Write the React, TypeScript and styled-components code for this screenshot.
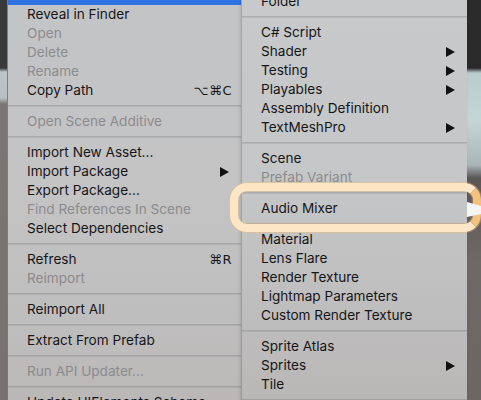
import React from 'react';
import styled, { createGlobalStyle } from 'styled-components';

const GlobalStyle = createGlobalStyle`
    body {
        margin: 0;
        background: #2b2b2b;
        font-family: Inter, "DejaVu Sans", sans-serif;
    }
`

type Item =
    | { kind: 'sep' }
    | { kind: 'item'; label: string; disabled?: boolean; sub?: boolean; shortcut?: string; active?: boolean };

const sep: Item = { kind: 'sep' };
const it = (label: string, extra: Partial<Omit<Extract<Item, { kind: 'item' }>, 'kind' | 'label'>> = {}): Item =>
    ({ kind: 'item', label, ...extra });

const leftItems: Item[] = [
    it('Create', { active: true }),
    it('Reveal in Finder'),
    it('Open', { disabled: true }),
    it('Delete', { disabled: true }),
    it('Rename', { disabled: true }),
    it('Copy Path', { shortcut: '⌥⌘C' }),
    sep,
    it('Open Scene Additive', { disabled: true }),
    sep,
    it('Import New Asset...'),
    it('Import Package', { sub: true }),
    it('Export Package...'),
    it('Find References In Scene', { disabled: true }),
    it('Select Dependencies'),
    sep,
    it('Refresh', { shortcut: '⌘R' }),
    it('Reimport', { disabled: true }),
    sep,
    it('Reimport All'),
    sep,
    it('Extract From Prefab'),
    sep,
    it('Run API Updater...', { disabled: true }),
    sep,
    it('Update UIElements Schema'),
];

const rightItems: Item[] = [
    it('Folder'),
    sep,
    it('C# Script'),
    it('Shader', { sub: true }),
    it('Testing', { sub: true }),
    it('Playables', { sub: true }),
    it('Assembly Definition'),
    it('TextMeshPro', { sub: true }),
    sep,
    it('Scene'),
    it('Prefab Variant', { disabled: true }),
    sep,
    it('Audio Mixer'),
    sep,
    it('Material'),
    it('Lens Flare'),
    it('Render Texture'),
    it('Lightmap Parameters'),
    it('Custom Render Texture'),
    sep,
    it('Sprite Atlas'),
    it('Sprites', { sub: true }),
    it('Tile'),
    sep,
];

const Screen = styled.div`
    position: relative;
    width: 481px;
    height: 400px;
    overflow: hidden;
    display: flex;
    align-items: flex-start;
`

const LeftEdge = styled.div`
    width: 7px;
    height: 100%;
    flex-shrink: 0;
    background: linear-gradient(to bottom, #3a3a3b 0, #3a3a3b 68px, #bcc5c8 72px, #b7bfc2 98px, #7b7675 104px, #777271 100%);
`

const RightEdge = styled.div`
    flex: 1;
    height: 100%;
    background: linear-gradient(to bottom, #2a2a2b 0, #2a2a2b 68px, #b9cdcf 73px, #c4d6d6 120px, #a9b6b8 165px, #5a5656 178px, #6e6866 260px, #6d6663 100%);
`

const Menu = styled.div<{ $width: number; $offset: number; $side: 'left' | 'right' }>`
    width: ${p => p.$width}px;
    flex-shrink: 0;
    margin-top: ${p => p.$offset}px;
    height: 440px;
    box-sizing: border-box;
    display: flex;
    flex-direction: column;
    background: ${p => p.$side === 'left'
        ? 'linear-gradient(to bottom, #c3c4c6 0%, #c4c4c5 45%, #bfbebe 75%, #b9b6b5 100%)'
        : 'linear-gradient(to bottom, #c7c9cb 0%, #c5c6c7 45%, #bebdbd 75%, #b8b5b4 100%)'};
    border-left: 1px solid ${p => p.$side === 'left' ? 'rgba(0,0,0,0.35)' : 'rgba(0,0,0,0.18)'};
    ${p => p.$side === 'right' && 'box-shadow: -1px 0 3px rgba(0,0,0,0.12);'}
    position: relative;
`

const Row = styled.div<{ $disabled?: boolean; $active?: boolean }>`
    height: 19px;
    line-height: 19px;
    display: flex;
    align-items: center;
    padding: 0 9px 0 19px;
    font-size: 13.6px;
    white-space: nowrap;
    color: ${p => p.$active ? '#ffffff' : p.$disabled ? '#8b8b8d' : '#161617'};
    background: ${p => p.$active ? '#2f72e4' : 'transparent'};
`

const Label = styled.span`
    flex: 1;
`

const Shortcut = styled.span`
    font-family: "DejaVu Sans", sans-serif;
    font-size: 13px;
    letter-spacing: 0.5px;
`

const Arrow = styled.svg`
    width: 9px;
    height: 10px;
    margin-right: 3px;
`

const Separator = styled.div`
    height: 12px;
    display: flex;
    align-items: center;
    &::after {
        content: '';
        flex: 1;
        height: 1px;
        background: rgba(0, 0, 0, 0.13);
        border-bottom: 1px solid rgba(255, 255, 255, 0.12);
    }
`

const Ring = styled.div`
    position: absolute;
    left: 230px;
    top: 183px;
    width: 251px;
    height: 49px;
    box-sizing: border-box;
    border: 8px solid #fde6c5;
    border-right-color: #f3c27f;
    border-radius: 17px;
    box-shadow: 0 0 1px 1px rgba(244, 190, 110, 0.45), inset 0 0 1px 1px rgba(244, 190, 110, 0.35);
`

const Pointer = styled.svg`
    position: absolute;
    left: 467px;
    top: 198px;
    width: 14px;
    height: 22px;
`

const MenuList: React.FC<{ items: Item[] }> = ({ items }) => <>
    {items.map((item, i) => item.kind === 'sep'
        ? <Separator key={i} />
        : <Row key={i} $disabled={item.disabled} $active={item.active}>
            <Label>{item.label}</Label>
            {item.shortcut && <Shortcut>{item.shortcut}</Shortcut>}
            {item.sub && <Arrow viewBox="0 0 9 10"><polygon points="0,0 9,5 0,10" fill="#111" /></Arrow>}
        </Row>
    )}
</>

const App: React.FC = () => {
    return <>
        <GlobalStyle />
        <Screen>
            <LeftEdge />
            <Menu $width={234} $offset={-14} $side="left">
                <MenuList items={leftItems} />
            </Menu>
            <Menu $width={226} $offset={-8} $side="right">
                <MenuList items={rightItems} />
            </Menu>
            <RightEdge />
            <Ring />
            <Pointer viewBox="0 0 14 22">
                <polygon points="0,4 14,8 14,16 0,19" fill="#f4f4f2" />
            </Pointer>
        </Screen>
    </>
}

export default App;
